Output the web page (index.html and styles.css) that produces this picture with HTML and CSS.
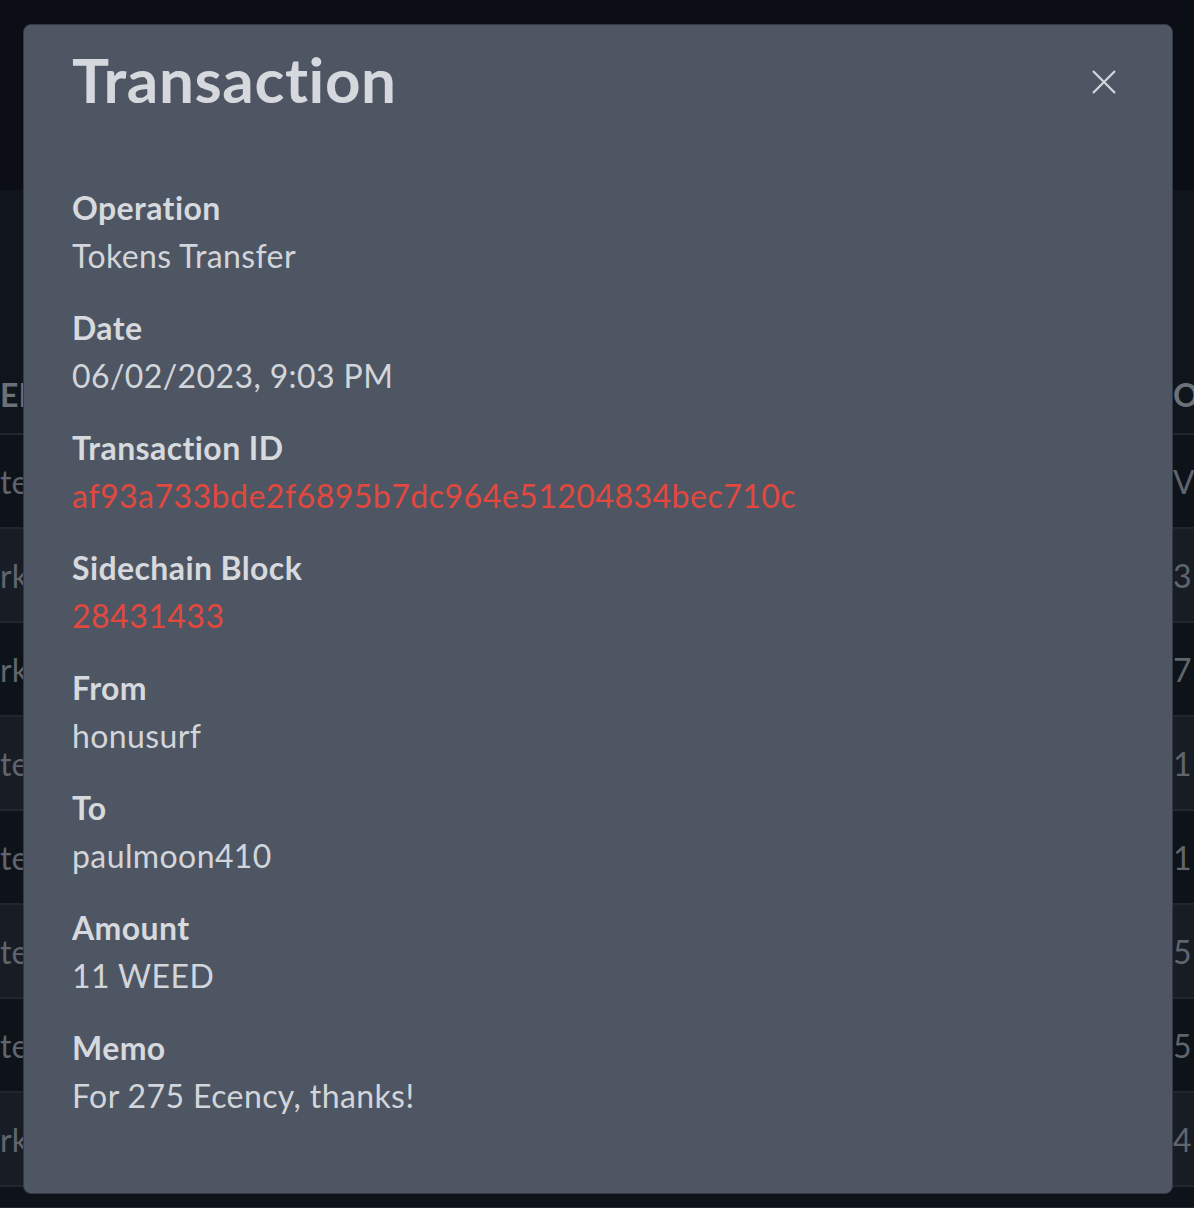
FILE: index.html
```html
<!DOCTYPE html>
<html lang="en">
<head>
<meta charset="utf-8">
<title>Transaction</title>
<link rel="stylesheet" href="styles.css">
</head>
<body>
<div class="page">
  <div class="topbar"></div>
  <div class="table">
    <div class="row head"><span class="cell-l">EI</span><span class="cell-r">OU</span></div>
    <div class="row"><span class="cell-l">te</span><span class="cell-r">VI</span></div>
    <div class="row alt"><span class="cell-l">rk</span><span class="cell-r">3</span></div>
    <div class="row"><span class="cell-l">rk</span><span class="cell-r">7</span></div>
    <div class="row alt"><span class="cell-l">te</span><span class="cell-r">1</span></div>
    <div class="row"><span class="cell-l">te</span><span class="cell-r">1</span></div>
    <div class="row alt"><span class="cell-l">te</span><span class="cell-r">5</span></div>
    <div class="row"><span class="cell-l">te</span><span class="cell-r">5</span></div>
    <div class="row alt"><span class="cell-l">rk</span><span class="cell-r">4</span></div>
    <div class="row last"></div>
  </div>
</div>

<div class="modal">
  <div class="modal-header">
    <h1 class="modal-title">Transaction</h1>
    <button class="close" aria-label="Close">
      <svg width="24" height="24" viewBox="0 0 24 24"><path d="M1 1 L23 23 M23 1 L1 23" stroke="#d6d8dc" stroke-width="2.2" fill="none"/></svg>
    </button>
  </div>
  <div class="modal-body">
    <div class="field"><div class="label">Operation</div><div class="value">Tokens Transfer</div></div>
    <div class="field"><div class="label">Date</div><div class="value">06/02/2023, 9:03 PM</div></div>
    <div class="field"><div class="label">Transaction ID</div><div class="value link hash">af93a733bde2f6895b7dc964e51204834bec710c</div></div>
    <div class="field"><div class="label">Sidechain Block</div><div class="value link hash">28431433</div></div>
    <div class="field"><div class="label">From</div><div class="value">honusurf</div></div>
    <div class="field"><div class="label">To</div><div class="value">paulmoon410</div></div>
    <div class="field"><div class="label">Amount</div><div class="value">11 WEED</div></div>
    <div class="field"><div class="label">Memo</div><div class="value">For 275 Ecency, thanks!</div></div>
  </div>
</div>
</body>
</html>
```

FILE: styles.css
```css
html, body {
  margin: 0;
  padding: 0;
}
body {
  background: #0d1117;
  font-family: Lato, "Open Sans", "DejaVu Sans", sans-serif;
  font-variant-ligatures: none;
  overflow: hidden;
  width: 1194px;
  height: 1208px;
}
.page {
  width: 1194px;
  height: 1208px;
  overflow: hidden;
}
.topbar {
  height: 190px;
  background: #0b0f15;
}
.table {
  background: #10141b;
  padding-top: 165px;
}
.row {
  height: 92px;
  display: flex;
  align-items: center;
  justify-content: space-between;
  border-bottom: 2px solid #22262e;
  background: #0e1219;
  color: #60656d;
  font-size: 32px;
  white-space: nowrap;
}
.row.alt {
  background: #181c24;
}
.row.last {
  height: 20px;
}
.row.head {
  height: 78px;
  background: #10141b;
  color: #6c7078;
  font-weight: 700;
}
.cell-l {
  margin-left: 0;
}
.cell-r {
  width: 21px;
  overflow: hidden;
}
.modal {
  position: fixed;
  left: 23px;
  top: 24px;
  width: 1150px;
  height: 1170px;
  background: #4f5663;
  border: 1px solid #343943;
  border-radius: 8px;
  box-sizing: border-box;
  color: #d4d7dc;
}
.modal-header {
  display: flex;
  align-items: center;
  justify-content: space-between;
  padding: 18px 56px 0 48px;
}
.modal-title {
  margin: 0;
  font-size: 62px;
  line-height: 72px;
  font-weight: 700;
  letter-spacing: 0.6px;
  color: #d5d8dd;
}
.close {
  background: none;
  border: 0;
  padding: 0;
  margin-top: 6px;
  width: 24px;
  height: 24px;
  cursor: pointer;
  display: flex;
}
.modal-body {
  padding: 69px 48px 0 48px;
  display: flex;
  flex-direction: column;
  gap: 24px;
}
.field {
  font-size: 32px;
  line-height: 48px;
  letter-spacing: 0.4px;
}
.label {
  font-weight: 700;
  color: #d6d9de;
}
.value {
  color: #d2d5da;
}
.link {
  color: #e2483d;
}
.hash {
  letter-spacing: 0.5px;
}
```
